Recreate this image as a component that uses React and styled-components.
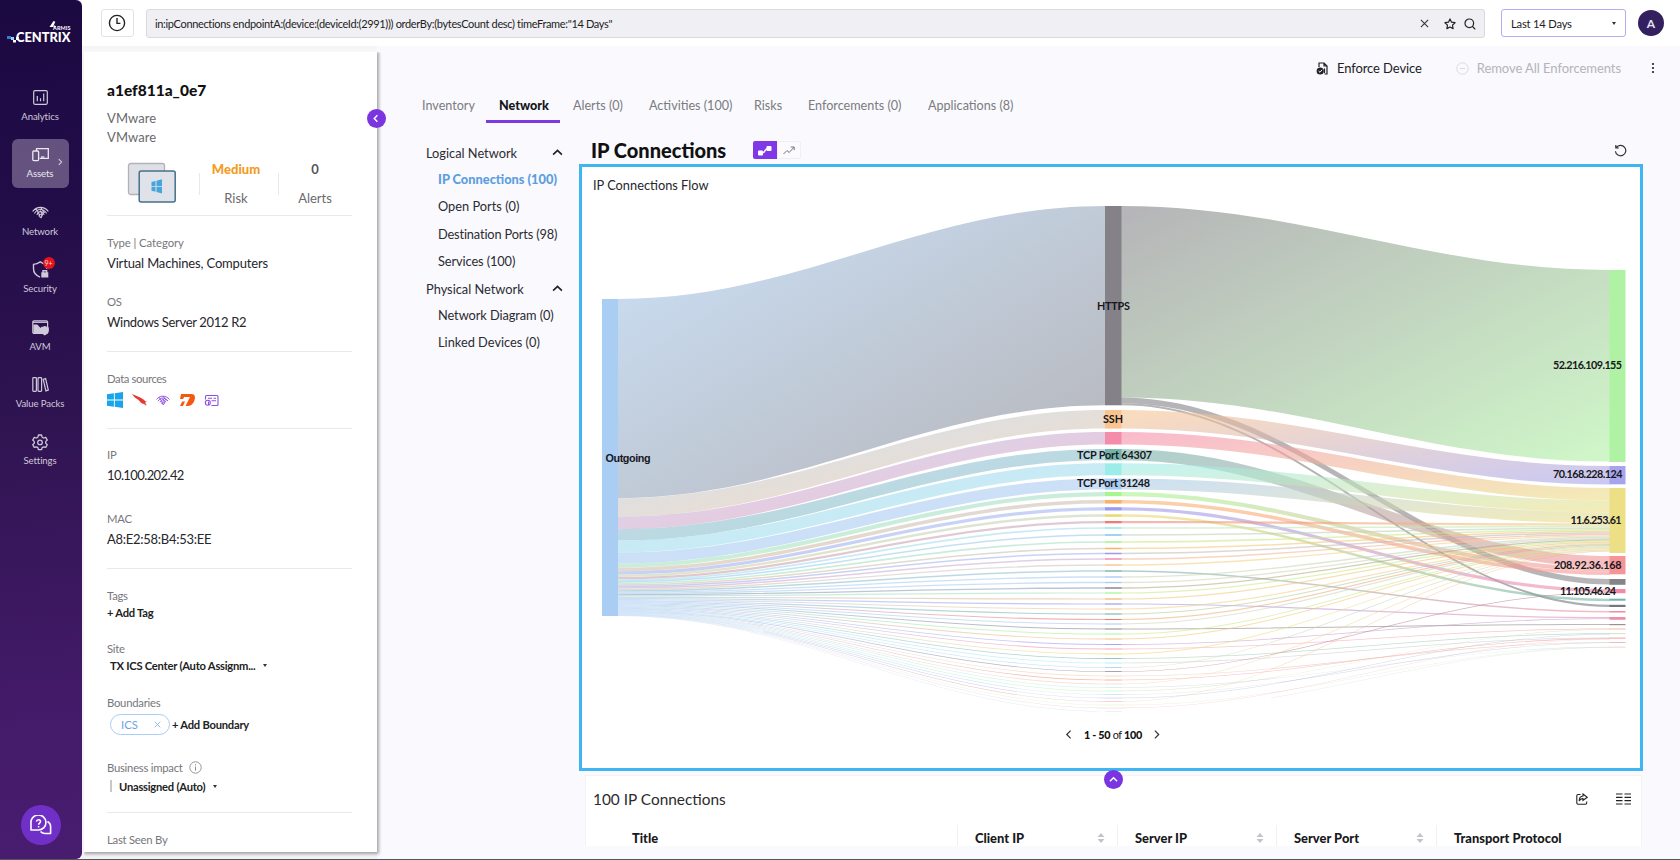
import React from "react";
import styled, { createGlobalStyle } from "styled-components";

const Global = createGlobalStyle`
  * { box-sizing: border-box; }
  html, body { margin: 0; padding: 0; }
  body {
    font-family: Lato, "Open Sans", sans-serif;
    font-size: 13px;
    color: #26262b;
    background: #f9f9fe;
    overflow: hidden;
  }
`;

/* ---------- layout ---------- */
const Shell = styled.div`
  display: flex;
  width: 1680px;
  height: 860px;
  overflow: hidden;
  background: #f9f9fe;
  border-bottom: 1px solid #55555a;
`;
const Sidebar = styled.nav`
  width: 82px;
  height: 859px;
  flex: none;
  display: flex;
  flex-direction: column;
  align-items: center;
  border-radius: 0 6px 6px 0;
  background: linear-gradient(175deg, #1b0941 0%, #230d49 25%, #301452 50%, #451b6b 85%, #481c6f 100%);
`;
const Logo = styled.div`
  height: 82px;
  padding-top: 20px;
  padding-right: 2px;
`;
const NavItem = styled.div`
  position: relative;
  width: 57px;
  height: 49px;
  margin-bottom: 8.4px;
  margin-right: 2px;
  border-radius: 6px;
  display: flex;
  flex-direction: column;
  align-items: center;
  padding-top: 7px;
  gap: 3px;
  color: ${(p) => (p.$active ? "#ece8f1" : "#cfc9da")};
  background: ${(p) => (p.$active ? "rgba(196,180,205,.42)" : "transparent")};
  font-size: 9.6px;
  letter-spacing: -0.1px;
  line-height: 16px;
  white-space: nowrap;
  svg { display: block; overflow: visible; }
`;
const NavIcon = styled.div`
  height: 17px;
  display: flex;
  align-items: center;
`;
const NavChevron = styled.span`
  position: absolute;
  right: 5px;
  top: 19px;
`;
const NavBadge = styled.span`
  position: absolute;
  left: 31px;
  top: 3px;
  width: 12px;
  height: 12px;
  border-radius: 50%;
  background: #e3121b;
  color: #ffd9d9;
  font-size: 7px;
  line-height: 12px;
  text-align: center;
`;
const HelpButton = styled.div`
  margin-top: auto;
  margin-bottom: 14px;
  width: 40px;
  height: 40px;
  border-radius: 50%;
  background: #7030c8;
  display: flex;
  align-items: center;
  justify-content: center;
`;
const Page = styled.div`
  flex: 1;
  min-width: 0;
  display: flex;
  flex-direction: column;
`;
const Header = styled.header`
  height: 46px;
  flex: none;
  background: #fff;
  display: flex;
  align-items: flex-start;
  padding: 9px 16px 0 19px;
`;
const HistoryButton = styled.div`
  width: 33px;
  height: 28px;
  border: 1px solid #e3e3e6;
  border-radius: 3px;
  display: flex;
  align-items: center;
  justify-content: center;
  padding-right: 1px;
`;
const SearchBox = styled.div`
  margin-left: 12px;
  width: 1339px;
  height: 29px;
  border: 1px solid #d9d9de;
  border-radius: 3px;
  background: #f0f0f4;
  display: flex;
  align-items: center;
  padding: 0 8px;
  font-size: 11px;
  color: #222;
  letter-spacing: -0.34px;
  svg { margin-left: 11px; }
  svg:first-of-type { margin-left: auto; margin-right: 4px; }
  svg:last-of-type { margin-left: 8px; }
`;
const RangeSelect = styled.div`
  margin-left: 16px;
  width: 125px;
  height: 28px;
  border: 1px solid #bca8ec;
  border-radius: 3px;
  background: #fff;
  display: flex;
  align-items: center;
  justify-content: space-between;
  padding: 0 9px;
  font-size: 11.2px;
  letter-spacing: -0.2px;
  color: #222;
`;
const Avatar = styled.div`
  margin: 1px 0 0 12px;
  width: 26px;
  height: 26px;
  border-radius: 50%;
  background: #33205f;
  color: #e6e1f0;
  font-weight: 700;
  font-size: 12px;
  line-height: 27px;
  text-align: center;
`;
const Body = styled.div`
  flex: 1;
  min-height: 0;
  display: flex;
`;

/* ---------- device panel ---------- */
const PanelWrap = styled.div`
  position: relative;
  width: 295px;
  flex: none;
  padding: 6px 0 0 2px;
  background: linear-gradient(#f4f4f6 0, #f8f8fa 6px, #f3f3f6 7px);
`;
const Panel = styled.aside`
  height: 800px;
  padding: 26px 23px 0 23px;
  background: #fff;
  box-shadow: 1px 1px 3px 1px rgba(0, 0, 0, .33);
  clip-path: inset(0 -6px -6px 0);
`;
const CollapseButton = styled.div`
  position: absolute;
  right: -9px;
  top: 63px;
  width: 19px;
  height: 19px;
  border-radius: 50%;
  background: #7a35e0;
  display: flex;
  align-items: center;
  justify-content: center;
`;
const DeviceName = styled.h1`
  margin: 0 0 7px;
  font-size: 15.5px;
  line-height: 24px;
  font-weight: 900;
  color: #111;
`;
const Vendor = styled.div`
  font-size: 13px;
  line-height: 19px;
  letter-spacing: 0.1px;
  color: #6a6a6e;
`;
const Summary = styled.div`
  width: 245px;
  height: 69px;
  display: grid;
  grid-template-columns: 92px 79px 74px;
  border-bottom: 1px solid #e9e9ec;
`;
const DeviceArt = styled.div`
  padding: 15px 0 0 19px;
`;
const Stat = styled.div`
  position: relative;
  display: flex;
  flex-direction: column;
  align-items: center;
  padding-top: 12px;
  padding-right: ${(p) => p.$shift || 0}px;
  gap: 9px;
  line-height: 20px;
  color: #6a6a6e;
  background: linear-gradient(#e8e8ec, #e8e8ec) 0 26px / 1px 22px no-repeat;
`;
const StatValue = styled.div`
  font-size: 13px;
  font-weight: ${(p) => (p.$tone ? 900 : 700)};
  color: ${(p) => p.$tone || "#55555a"};
`;
const Label = styled.div`
  display: flex;
  align-items: center;
  gap: 6px;
  margin-top: ${(p) => p.$mt}px;
  font-size: 11.3px;
  letter-spacing: ${(p) => p.$ls ?? -0.25}px;
  line-height: 16px;
  color: #77777c;
`;
const Value = styled.div`
  margin-top: 2px;
  font-size: 13px;
  line-height: 20px;
  color: #26262b;
  letter-spacing: ${(p) => p.$ls || 0}px;
`;
const Action = styled.div`
  display: flex;
  align-items: center;
  height: 20px;
  margin-top: ${(p) => p.$mt || 0}px;
  margin-left: ${(p) => p.$ml || 0}px;
  font-size: 11.2px;
  letter-spacing: -0.24px;
  font-weight: 700;
  color: #222;
`;
const ImpactBar = styled.span`
  width: 2px;
  height: 12px;
  margin-right: 7px;
  background: #c8c8cc;
`;
const Caret = styled.span`
  width: 0;
  height: 0;
  margin-left: ${(p) => p.$ml || 0}px;
  border: 2.5px solid transparent;
  border-top: 3px solid #333;
  border-bottom: 0;
`;
const Rule = styled.div`
  width: 245px;
  height: 1px;
  margin-top: ${(p) => p.$mt}px;
  background: #e9e9ec;
`;
const SourceRow = styled.div`
  height: 20px;
  margin-top: 3px;
  display: flex;
  align-items: center;
  gap: 8.5px;
  svg { display: block; }
`;
const ChipRow = styled.div`
  display: flex;
  align-items: center;
  height: 21px;
  margin: 3px 0 0 3px;
`;
const Chip = styled.div`
  width: 60px;
  height: 21px;
  border: 1px solid #a9cdf5;
  border-radius: 11px;
  display: flex;
  align-items: center;
  justify-content: space-between;
  padding: 0 8px 0 10px;
  margin-right: 2px;
  font-size: 11.3px;
  color: #6aa5e6;
`;

/* ---------- main area ---------- */
const Main = styled.main`
  flex: 1;
  min-width: 0;
  padding: 10px 0 0 32px;
`;
const ActionBar = styled.div`
  height: 24px;
  display: flex;
  align-items: center;
  justify-content: flex-end;
  padding-right: 25px;
  font-size: 13px;
`;
const ActionItem = styled.div`
  display: flex;
  align-items: center;
  gap: 8px;
  margin-right: ${(p) => p.$mr}px;
  color: ${(p) => (p.$off ? "#b4b4ba" : "#222")};
  letter-spacing: ${(p) => p.$ls || 0}px;
`;
const Tabs = styled.div`
  display: flex;
  height: 37px;
  margin-top: 6px;
`;
const Tab = styled.div`
  padding: 11px 13px 0;
  width: ${(p) => p.$w}px;
  white-space: nowrap;
  font-size: 12.6px;
  line-height: 17px;
  height: 37px;
  font-weight: ${(p) => (p.$active ? 900 : 400)};
  color: ${(p) => (p.$active ? "#161618" : "#7b7b80")};
  border-bottom: 3px solid ${(p) => (p.$active ? "#7c3ae0" : "transparent")};
`;
const Columns = styled.div`
  display: flex;
`;
const Tree = styled.div`
  width: 170px;
  flex: none;
  padding: 16px 15px 0 17px;
`;
const TreeGroup = styled.div`
  display: flex;
  align-items: center;
  justify-content: space-between;
  height: 27.2px;
  padding-right: 1px;
  font-size: 12.8px;
  color: #2b2b30;
`;
const TreeLeaf = styled.div`
  height: 27.2px;
  line-height: 27px;
  padding-left: 12px;
  font-size: 12.8px;
  letter-spacing: ${(p) => p.$ls || 0}px;
  white-space: nowrap;
  font-weight: ${(p) => (p.$active ? 900 : 400)};
  color: ${(p) => (p.$active ? "#5d9fde" : "#2b2b30")};
`;
const Content = styled.section`
  width: 1064px;
`;
const TitleRow = styled.div`
  height: 41px;
  display: flex;
  align-items: center;
  padding: 13px 16px 0 12px;
`;
const Title = styled.h2`
  margin: -1px 0 0;
  width: 162px;
  font-size: 20px;
  line-height: 24px;
  font-weight: 900;
  color: #111;
`;
const Toggle = styled.div`
  display: flex;
  width: 48px;
  height: 18px;
  margin-right: auto;
`;
const ToggleHalf = styled.div`
  width: 24px;
  height: 18px;
  display: flex;
  align-items: center;
  justify-content: center;
  border-radius: ${(p) => (p.$on ? "2px 0 0 2px" : "0 2px 2px 0")};
  background: ${(p) => (p.$on ? "#8038e6" : "#fbfbfe")};
  border: ${(p) => (p.$on ? "0" : "1px solid #f0f0f4")};
`;
const ChartCard = styled.div`
  position: relative;
  width: 1064px;
  height: 607px;
  border: 3px solid #3fb6f2;
  background: #fff;
  display: flex;
  flex-direction: column;
`;
const ChartTitle = styled.div`
  height: 36px;
  padding: 8px 0 0 11px;
  font-size: 12.8px;
  line-height: 20px;
`;
const Pager = styled.div`
  display: flex;
  justify-content: center;
  align-items: center;
  gap: 9px;
  height: 20px;
  margin-top: 3px;
  padding-left: 4px;
  font-size: 10.8px;
  letter-spacing: -0.3px;
  color: #111;
  b { font-weight: 900; }
`;
const ExpandButton = styled.div`
  position: absolute;
  left: 522px;
  top: 603px;
  z-index: 2;
  width: 19px;
  height: 19px;
  border-radius: 50%;
  background: #7a35e0;
  display: flex;
  align-items: center;
  justify-content: center;
`;
const TableCard = styled.div`
  margin: 4px 0 0 6px;
  width: 1057px;
  height: 71px;
  background: #fff;
  border: 1px solid #f3f3f6;
  border-bottom: 0;
`;
const TableTop = styled.div`
  height: 49px;
  display: flex;
  align-items: center;
  padding: 0 10px 4px 7px;
  font-size: 15.4px;
  color: #2b2b30;
  span { margin-right: auto; }
  svg + svg { margin-left: 28px; }
`;
const HeadRow = styled.div`
  height: 21px;
  display: flex;
  overflow: hidden;
`;
const HeadCell = styled.div`
  width: ${(p) => p.$w}px;
  padding: 5px 12px 0 ${(p) => p.$pl || 17}px;
  border-left: 1px solid ${(p) => (p.$pl ? "transparent" : "#f1f1f4")};
  display: flex;
  justify-content: space-between;
  align-items: center;
  line-height: 18px;
  white-space: nowrap;
  font-size: 12.9px;
  font-weight: 900;
  color: #19191c;
`;

/* ---------- icons ---------- */
const Chevron = ({ dir, size = 8, color = "#fff", w = 1.6 }) => {
  const d = {
    left: "M6 1.5 2.5 5 6 8.5",
    right: "M3.5 1.5 7 5 3.5 8.5",
    up: "M1 7 5 3 9 7",
  }[dir];
  return (
    <svg width={size} height={size} viewBox="0 0 10 10" fill="none" stroke={color} strokeWidth={w}>
      <path d={d} />
    </svg>
  );
};
const Cross = ({ size, color }) => (
  <svg width={size} height={size} viewBox="0 0 10 10" stroke={color} strokeWidth="1.2">
    <path d="M1 1 9 9M9 1 1 9" />
  </svg>
);
const Fingerprint = ({ color = "#cfc9da", w = 17 }) => (
  <svg width={w} height={w * 0.75} viewBox="0 0 17 13" fill="none" stroke={color} strokeWidth="1.15" strokeLinecap="round">
    <path d="M.8 5.200C4.600.100 12.400.100 16.200 5.200M2.600 7.200C5.400 2.400 11.600 2.400 14.400 7.200M5 8.600C6.600 4.800 10.400 4.800 12 8.600M7 10.200c.6-2.400 2.400-2.400 3 0M3.800 3l2.600 3.800 1.800 4.600M9 2l3.400 4.600M8.500 5l2 4-1.400 3" />
  </svg>
);
const WindowsMark = ({ size, color }) => (
  <svg width={size} height={size} viewBox="0 0 16 16" fill={color}>
    <path d="M0 2.3 6.9 1.3V7.6H0zM7.8 1.2 16 0V7.6H7.8zM0 8.4H6.9V14.7L0 13.7zM7.8 8.4H16V16L7.8 14.8z" />
  </svg>
);
const navIcons = {
  analytics: (
    <svg width="15" height="15" viewBox="0 0 15 15" fill="none" stroke="currentColor" strokeWidth="1.2">
      <rect x=".7" y=".7" width="13.6" height="13.6" rx="1.2" />
      <path d="M4.3 6v5.3M7.5 8.3v3M10.7 3.6v7.7" />
    </svg>
  ),
  assets: (
    <svg width="17" height="15" viewBox="0 0 17 15" fill="none" stroke="currentColor" strokeWidth="1.3">
      <path d="M4.5 4V1.7h11.8v9.6H7.6" />
      <rect x=".8" y="4" width="5.8" height="9.6" rx="1" />
      <path d="M9 10h3.4" />
    </svg>
  ),
  network: <Fingerprint />,
  security: (
    <svg width="17" height="17" viewBox="0 0 17 17" fill="none" stroke="currentColor" strokeWidth="1.4">
      <path d="M14.8 8V3.4C12 3.2 10 2.2 8.2.9 6.4 2.2 4.200 3.200 1.500 3.400V7.500C1.500 11.600 4 14.600 8 16.100" />
      <rect x="10" y="12" width="5.600" height="3.800" fill="currentColor" />
      <path d="M11 12V9.800h3.600V12" />
    </svg>
  ),
  avm: (
    <svg width="17" height="15" viewBox="0 0 17 15" fill="none" stroke="currentColor" strokeWidth="1.2">
      <rect x=".8" y=".8" width="14.8" height="12.600" rx="1.200" />
      <path d="M1 2.300H15.500" strokeWidth="1.200" />
      <path d="M2 5 5 5 8.500 9 9.500 8V13H2z" fill="currentColor" />
      <path d="M9.400 7.800l3.400-1.200 3.400 1.200v3c0 2-1.800 3.200-3.400 4-1.600-.8-3.400-2-3.400-4z" fill="currentColor" />
    </svg>
  ),
  packs: (
    <svg width="17" height="15" viewBox="0 0 17 15" fill="none" stroke="currentColor" strokeWidth="1.200">
      <rect x=".8" y=".7" width="3.600" height="13.600" rx=".8" />
      <rect x="6" y=".7" width="3.600" height="13.600" rx=".8" />
      <path d="M11.200 2.300l2.400-.7 2.700 11.600-2.400.7z" />
    </svg>
  ),
  settings: (
    <svg width="16" height="16" viewBox="0 0 24 24" fill="none" stroke="currentColor" strokeWidth="1.900" strokeLinejoin="round">
      <path d="M9.700 1.500h4.600l.9 3.300 2.100 1.200 3.300-.9 2.300 4-2.400 2.400v2.200l2.400 2.400-2.300 4-3.300-.9-2.100 1.200-.9 3.200H9.700l-.9-3.200-2.100-1.200-3.300.9-2.300-4 2.400-2.400v-2.200L1.100 9.100l2.300-4 3.300.9 2.100-1.200z" />
      <circle cx="12" cy="12.600" r="3.400" />
    </svg>
  ),
};

const Sort = () => (
  <svg width="8" height="10" viewBox="0 0 8 10" fill="#c3c3c8">
    <path d="M4 0 7.500 4H.5zM4 10 .5 6h7z" />
  </svg>
);

/* ---------- flow chart ---------- */
const OFF_X = 582;
const OFF_Y = 203;
const palette = {
  grey: "#848288", orange: "#f9c490", pink: "#f58cab", teal: "#74b3aa", cyan: "#9cecea",
  blue: "#a9cbf0", green: "#a6f590", amber: "#f8b26c", purple: "#9b9aee", yellow: "#ecd96a",
  red: "#f27a72", sky: "#8fc8e6", dark: "#77757d", brown: "#a08a80",
};
const big = [
  ["grey", 206, 199.3], ["orange", 410, 18.6], ["pink", 432, 12.5], ["teal", 449, 11.3],
  ["cyan", 463.3, 12], ["blue", 478.6, 11], ["green", 492, 4.2], ["amber", 500, 3.6],
  ["purple", 507.2, 3.3], ["yellow", 514.3, 2.5], ["red", 521, 2.3],
];
const thinY = [
  528, 535, 542, 548.5, 553.5, 559, 565, 571, 577, 582.5, 588, 593, 599, 604, 609, 614, 619.5, 624,
  629, 634, 639, 644.5, 649, 654, 658.5, 663, 667.5, 671.5, 676, 680, 684, 687.5, 691, 694.5,
  698, 701.5, 705, 708, 711.5,
];
const thinColor = [
  "cyan", "sky", "green", "amber", "purple", "pink", "orange", "teal", "blue", "blue", "dark", "green",
  "amber", "purple", "orange", "teal", "red", "blue", "grey", "green", "amber", "purple", "pink", "yellow",
  "teal", "cyan", "sky", "dark", "orange", "red", "orange", "cyan", "green", "sky", "purple", "red", "green", "pink", "sky",
];
const ports = [
  ...big.map(([c, y, h]) => ({ c: palette[c], y, h })),
  ...thinY.map((y, i) => {
    const h = 1.65 - (i * 1.42) / 38;
    return { c: palette[thinColor[i]], y: y - h / 2, h };
  }),
];
const hosts = [
  ["#b0f2a4", 270, 192], ["#a6a4ec", 466, 18.3], ["#ecdf86", 488, 65], ["#f79496", 556, 18.3],
  ["#858589", 579, 5.8], ["#f28ba6", 589, 4.2], ["#6fb3aa", 598.7, 2], ["#77777b", 604.8, 2.2],
  ["#f08ba0", 611, 1.5], ["#ee8fae", 617, 2.8], ["#a08f86", 624, 1.2], ["#f3b9b4", 628.5, 1],
  ["#c0e0b4", 633.3, 0.8], ["#f2a0a0", 637.6, 1], ["#dcb0c0", 642, 0.8], ["#e6b8a8", 646.8, 0.6],
].map(([c, y, h]) => ({ c, y, h, used: 0 }));

const BEND = 0.37;
const ribbon = (x0, x1, y0, y1, h0, h1) => {
  const a = x0 + (x1 - x0) * BEND;
  const b = x1 - (x1 - x0) * BEND;
  return `M${x0} ${y0}C${a} ${y0} ${b} ${y1} ${x1} ${y1}V${y1 + h1}C${b} ${y1 + h1} ${a} ${y0 + h0} ${x0} ${y0 + h0}Z`;
};

const links = [];
const total = ports.reduce((s, p) => s + p.h, 0);
const scale = 317 / total;
let cursor = 299;
ports.forEach((p) => {
  links.push({ d: ribbon(618, 1105, cursor, p.y, p.h * scale, p.h), from: "#a9cdf3", to: p.c });
  cursor += p.h * scale;
});
const toHost = (p, off, h, t) => {
  const host = hosts[t];
  links.push({ d: ribbon(1121, 1610, p.y + off, host.y + host.used, h, h), from: p.c, to: host.c });
  host.used += h;
};
toHost(ports[0], 0, 191.6, 0);
toHost(ports[0], 191.6, 5.6, 4);
toHost(ports[0], 197.2, 2.1, 7);
const route = {
  1: 1, 2: 2, 3: 3, 4: 2, 5: 2, 6: 3, 7: 3, 8: 5, 9: 6, 18: 8, 24: 9, 29: 10, 32: 9, 33: 11, 35: 12,
  36: 13, 38: 5, 39: 14, 40: 13, 42: 15, 43: 11, 44: 14, 45: 12, 47: 15, 48: 13, 49: 15,
};
ports.forEach((p, i) => {
  if (i > 0) toHost(p, 0, p.h, route[i] ?? 2);
});

const marks = [
  ["Outgoing", 605.5, 458, 45, "start", '"Liberation Sans", sans-serif'],
  ["HTTPS", 1097, 305.5, 33, "start"],
  ["SSH", 1103, 418.5, 20, "start"],
  ["TCP Port 64307", 1077, 454.5, 75, "start"],
  ["TCP Port 31248", 1077, 483, 73, "start"],
  ["52.216.109.155", 1622, 365, 69, "end"],
  ["70.168.228.124", 1622.5, 474, 69.5, "end"],
  ["11.6.253.61", 1621.5, 520, 51, "end"],
  ["208.92.36.168", 1621.5, 564.5, 67.5, "end"],
  ["11.105.46.24", 1616, 591, 56, "end"],
];

const FlowSvg = styled.svg`
  display: block;
  flex: none;
  font-size: 10.8px;
  font-weight: 700;
`;

const FlowChart = () => (
  <FlowSvg width="1058" height="518" viewBox={`${OFF_X} ${OFF_Y} 1058 518`}>
    <defs>
      {links.map((l, i) => (
        <linearGradient key={i} id={`flow${i}`} x1="0" y1="0" x2="1" y2="1">
          <stop offset="0" stopColor={l.from} />
          <stop offset="1" stopColor={l.to} />
        </linearGradient>
      ))}
    </defs>
    {links.map((l, i) => (
      <path key={i} d={l.d} fill={`url(#flow${i})`} fillOpacity=".6" />
    ))}
    <rect x="602" y="299" width="16" height="317" fill="#a9cdf3" />
    {ports.map((p, i) => (
      <rect key={i} x="1105" y={p.y} width="16.5" height={p.h} fill={p.c} />
    ))}
    {hosts.map((h, i) => (
      <rect key={i} x="1609.5" y={h.y} width="16" height={h.h} fill={h.c} />
    ))}
    {marks.map(([t, x, y, w, anchor, family]) => (
      <text key={t} x={x} y={y + 4} textAnchor={anchor} textLength={w} fill="#17171c" fontFamily={family}>
        {t}
      </text>
    ))}
  </FlowSvg>
);

const nav = [
  ["analytics", "Analytics"], ["assets", "Assets"], ["network", "Network"], ["security", "Security"],
  ["avm", "AVM"], ["packs", "Value Packs"], ["settings", "Settings"],
];
const tabs = [
  ["Inventory", 77], ["Network", 74], ["Alerts (0)", 76], ["Activities (100)", 105], ["Risks", 54],
  ["Enforcements (0)", 120], ["Applications (8)", 112],
];

export default function App() {
  return (
    <>
      <Global />
      <Shell>
        <Sidebar>
          <Logo>
            <svg width="66" height="24" viewBox="0 0 66 24" fontFamily="Lato, sans-serif" fontWeight="900" fill="#fff">
              <path d="M42.500 7 46.500 1l1.800.8-2.300 5.200zM47 5.200l2 1-1 1.600-1.600-.4z" />
              <text x="46" y="10" fontSize="5.500" textLength="17.500" fontWeight="700">ARMIS</text>
              <path d="M0 16h4v3H0z" fill="#2f7fd0" />
              <path d="M4 17h3v3H4z" fill="#9fd0f2" />
              <path d="M6 20h3v2.500H6zM9 17h3l-1 3H9z" />
              <text x="9" y="22" fontSize="12.800" textLength="54.500" lengthAdjust="spacingAndGlyphs">CENTRIX</text>
            </svg>
          </Logo>
          {nav.map(([k, label]) => (
            <NavItem key={k} $active={k === "assets"}>
              <NavIcon>{navIcons[k]}</NavIcon>
              {label}
              {k === "assets" && (
                <NavChevron>
                  <Chevron dir="right" size={8} color="#d9d2e2" w={1.3} />
                </NavChevron>
              )}
              {k === "security" && <NavBadge>9+</NavBadge>}
            </NavItem>
          ))}
          <HelpButton>
            <svg width="22" height="20" viewBox="0 0 22 20" fill="none" stroke="#fff" strokeWidth="1.600" strokeLinejoin="round">
              <path d="M1 15V8.500A7.500 7.500 0 1 1 8.500 15z" />
              <path d="M17.500 6.500A6 6 0 0 1 20.600 12v6.500H15a6.500 6.500 0 0 1-4.500-2" />
              <path d="M6.500 6.600c.2-2.600 4-2.400 4 0 0 1.500-1.900 1.500-1.900 3.200M8.600 11v1.500" strokeWidth="1.500" />
            </svg>
          </HelpButton>
        </Sidebar>
        <Page>
          <Header>
            <HistoryButton>
              <svg width="18" height="18" viewBox="0 0 18 18" fill="none" stroke="#222" strokeWidth="1.400">
                <circle cx="9" cy="9" r="7.600" />
                <path d="M9 4v5.400h3.400" />
              </svg>
            </HistoryButton>
            <SearchBox>
              in:ipConnections endpointA:(device:(deviceId:(2991))) orderBy:(bytesCount desc) timeFrame:"14 Days"
              <Cross size={9} color="#333" />
              <svg width="12" height="12" viewBox="0 0 24 24" fill="none" stroke="#222" strokeWidth="2.400" strokeLinejoin="round">
                <path d="M12 2l3.100 6.400 7 1-5.100 4.900 1.200 7L12 18l-6.200 3.300 1.200-7L1.900 9.400l7-1z" />
              </svg>
              <svg width="12" height="12" viewBox="0 0 12 12" fill="none" stroke="#222" strokeWidth="1.200">
                <circle cx="5.300" cy="5.300" r="4.300" />
                <path d="M8.500 8.500 11.300 11.300" />
              </svg>
            </SearchBox>
            <RangeSelect>
              Last 14 Days
              <Caret />
            </RangeSelect>
            <Avatar>A</Avatar>
          </Header>
          <Body>
            <PanelWrap>
              <Panel>
                <DeviceName>a1ef811a_0e7</DeviceName>
                <Vendor>VMware</Vendor>
                <Vendor>VMware</Vendor>
                <Summary>
                  <DeviceArt>
                    <svg width="50" height="42" viewBox="0 0 50 42">
                      <rect x="2.500" y="1.500" width="36" height="31" rx="2" fill="#dfe0e5" stroke="#b1b3b8" strokeWidth="1.300" />
                      <rect x="13.200" y="9" width="36" height="31" rx="2" fill="#dfe2e9" stroke="#45708a" strokeWidth="1.500" />
                      <path d="M25.500 20l4-1.100v5h-4zM30.500 18.700l5.500-1.500v6.700h-5.500zM25.500 24.800h4v4.900l-4-1zM30.500 24.800H36v6.600l-5.500-1.400z" fill="#46a5dc" />
                    </svg>
                  </DeviceArt>
                  <Stat $shift={5}>
                    <StatValue $tone="#f39b22">Medium</StatValue>
                    Risk
                  </Stat>
                  <Stat>
                    <StatValue>0</StatValue>
                    Alerts
                  </Stat>
                </Summary>
                <Label $mt={19} $ls={-0.05}>Type | Category</Label>
                <Value $ls={-0.16}>Virtual Machines, Computers</Value>
                <Label $mt={21}>OS</Label>
                <Value $ls={-0.33}>Windows Server 2012 R2</Value>
                <Rule $mt={19} />
                <Label $mt={19} $ls={-0.4}>Data sources</Label>
                <SourceRow>
                  <WindowsMark size={16} color="#18a5ea" />
                  <svg width="16" height="14" viewBox="0 0 16 14">
                    <path d="M0 1c4 2 8 2.600 11.500 5.500 1.500 1.200 1.500 2 3.700 2.300-1 .4-2 .3-2.200 1.200 1 .5 1.500 1.400 1.300 2.700-1.500-1.900-3-1.700-4.500-2.500C7.500 9 7.800 7.600 5.500 6.200 3 5 1.500 3 0 1z" fill="#e23b35" />
                  </svg>
                  <Fingerprint color="#8c4fe0" w={14} />
                  <svg width="17" height="14" viewBox="0 0 17 14" fill="#f4590f">
                    <path d="M2 1H12.500C17 1 16.500 6 14.500 9.500 13 12 11 13 8.500 13H6.500L11 4H5L4.200 6H1zM1 13 3.200 8.500H6L4 13z" />
                  </svg>
                  <svg width="15" height="13" viewBox="0 0 15 13" fill="none" stroke="#8c4fe0" strokeWidth="1.100">
                    <path d="M1.500 5.500V2.500a1 1 0 0 1 1-1h10.500a1 1 0 0 1 1 1v8a1 1 0 0 1-1 1H7.500M4 4.200h4M9.500 4.200h2.500M7.500 6.800h4.500M4.500 7.500V11" />
                    <circle cx="3.800" cy="8.800" r="2.500" />
                  </svg>
                </SourceRow>
                <Rule $mt={18} />
                <Label $mt={18}>IP</Label>
                <Value $ls={-0.6}>10.100.202.42</Value>
                <Label $mt={25.5}>MAC</Label>
                <Value $ls={-0.27}>A8:E2:58:B4:53:EE</Value>
                <Rule $mt={19} />
                <Label $mt={19}>Tags</Label>
                <Action $mt={-1}>+ Add Tag</Action>
                <Label $mt={18}>Site</Label>
                <Action $mt={-1} $ml={3}>
                  TX ICS Center (Auto Assignm...
                  <Caret $ml={8} />
                </Action>
                <Label $mt={19}>Boundaries</Label>
                <ChipRow>
                  <Chip>
                    ICS
                    <Cross size={7} color="#7fb2ea" />
                  </Chip>
                  <Action>+ Add Boundary</Action>
                </ChipRow>
                <Label $mt={25}>
                  Business impact
                  <svg width="13" height="13" viewBox="0 0 13 13" fill="none" stroke="#8a8a90">
                    <circle cx="6.500" cy="6.500" r="5.700" strokeWidth=".9" />
                    <path d="M6.500 5.600v4M6.500 3.200v1.200" />
                  </svg>
                </Label>
                <Action $mt={0.5} $ml={3}>
                  <ImpactBar />
                  Unassigned (Auto)
                  <Caret $ml={8} />
                </Action>
                <Rule $mt={16} />
                <Label $mt={19}>Last Seen By</Label>
              </Panel>
              <CollapseButton>
                <Chevron dir="left" size={9} />
              </CollapseButton>
            </PanelWrap>
            <Main>
              <ActionBar>
                <ActionItem $mr={34} $ls={-0.1}>
                  <svg width="13" height="13" viewBox="0 0 13 13" fill="none" stroke="#222" strokeWidth="1.200">
                    <path d="M3 5V1h5l3 3v8H8.500M8 1v3h3M8.500 6.500V11" />
                    <circle cx="4.200" cy="9" r="3.600" fill="#222" stroke="none" />
                    <path d="M2.600 9 4 10.300 6 7.800" stroke="#fff" strokeWidth="1" />
                  </svg>
                  Enforce Device
                </ActionItem>
                <ActionItem $off $mr={30} $ls={-0.06}>
                  <svg width="13" height="13" viewBox="0 0 13 13" fill="none" stroke="#dadae0">
                    <circle cx="6.500" cy="6.500" r="5.700" />
                    <path d="M3.800 6.500h5.400" />
                  </svg>
                  Remove All Enforcements
                </ActionItem>
                <svg width="4" height="12" viewBox="0 0 4 12" fill="#222">
                  <circle cx="2" cy="2" r="1.100" />
                  <circle cx="2" cy="6" r="1.100" />
                  <circle cx="2" cy="10" r="1.100" />
                </svg>
              </ActionBar>
              <Tabs>
                {tabs.map(([t, w]) => (
                  <Tab key={t} $w={w} $active={t === "Network"}>{t}</Tab>
                ))}
              </Tabs>
              <Columns>
                <Tree>
                  <TreeGroup>Logical Network<Chevron dir="up" size={11} color="#222" w={1.5} /></TreeGroup>
                  <TreeLeaf $active>IP Connections (100)</TreeLeaf>
                  <TreeLeaf>Open Ports (0)</TreeLeaf>
                  <TreeLeaf $ls={-0.15}>Destination Ports (98)</TreeLeaf>
                  <TreeLeaf $ls={-0.1}>Services (100)</TreeLeaf>
                  <TreeGroup>Physical Network<Chevron dir="up" size={11} color="#222" w={1.5} /></TreeGroup>
                  <TreeLeaf $ls={-0.08}>Network Diagram (0)</TreeLeaf>
                  <TreeLeaf>Linked Devices (0)</TreeLeaf>
                </Tree>
                <Content>
                  <TitleRow>
                    <Title>IP Connections</Title>
                    <Toggle>
                      <ToggleHalf $on>
                        <svg width="14" height="11" viewBox="0 0 14 11" fill="#fff">
                          <rect x="0" y="5.500" width="5" height="5" rx="1" />
                          <rect x="8.500" y="1" width="5" height="5" rx="1" />
                          <path d="M4 8C8 8 6 3.500 10 3.500" stroke="#fff" strokeWidth="1.600" fill="none" />
                        </svg>
                      </ToggleHalf>
                      <ToggleHalf>
                        <svg width="12" height="9" viewBox="0 0 12 9" fill="none" stroke="#77777c">
                          <path d="M.5 8 4 4.500 6.200 6.500 11 1.200M7.800 1H11.200V4.200" />
                        </svg>
                      </ToggleHalf>
                    </Toggle>
                    <svg width="13" height="13" viewBox="0 0 13 13" fill="none" stroke="#333" strokeWidth="1.200">
                      <path d="M2.300 3.600A5.200 5.200 0 1 1 1.400 7.200M1.800 1V4H4.800" />
                    </svg>
                  </TitleRow>
                  <ChartCard>
                    <ChartTitle>IP Connections Flow</ChartTitle>
                    <FlowChart />
                    <Pager>
                      <Chevron dir="left" size={11} color="#333" w={1.1} />
                      <span><b>1 - 50</b> of <b>100</b></span>
                      <Chevron dir="right" size={11} color="#333" w={1.1} />
                    </Pager>
                    <ExpandButton>
                      <Chevron dir="up" size={9} />
                    </ExpandButton>
                  </ChartCard>
                  <TableCard>
                    <TableTop>
                      <span>100 IP Connections</span>
                      <svg width="12" height="12" viewBox="0 0 12 12" fill="none" stroke="#222" strokeWidth="1.100">
                        <path d="M4.500 1.500H2A1.200 1.200 0 0 0 .8 2.700V10A1.200 1.200 0 0 0 2 11.200H9.500A1.200 1.200 0 0 0 10.700 10V8.500" />
                        <path d="M7 1 11.200 4.300 7 7.500V5.600C5 5.500 4 6.200 3.200 8 3.200 5 4.500 3.200 7 3z" />
                      </svg>
                      <svg width="15" height="12" viewBox="0 0 15 12" stroke="#222" strokeWidth="1.200">
                        <path d="M0 1H6.500M8.500 1H15M0 4.300H6.500M8.500 4.300H15M0 7.600H6.500M8.500 7.600H15M0 11H6.500M8.500 11H15" />
                      </svg>
                    </TableTop>
                    <HeadRow>
                      <HeadCell $w={371} $pl={45}>Title</HeadCell>
                      <HeadCell $w={160}>Client IP<Sort /></HeadCell>
                      <HeadCell $w={159}>Server IP<Sort /></HeadCell>
                      <HeadCell $w={160}>Server Port<Sort /></HeadCell>
                      <HeadCell $w={205}>Transport Protocol</HeadCell>
                    </HeadRow>
                  </TableCard>
                </Content>
              </Columns>
            </Main>
          </Body>
        </Page>
      </Shell>
    </>
  );
}
